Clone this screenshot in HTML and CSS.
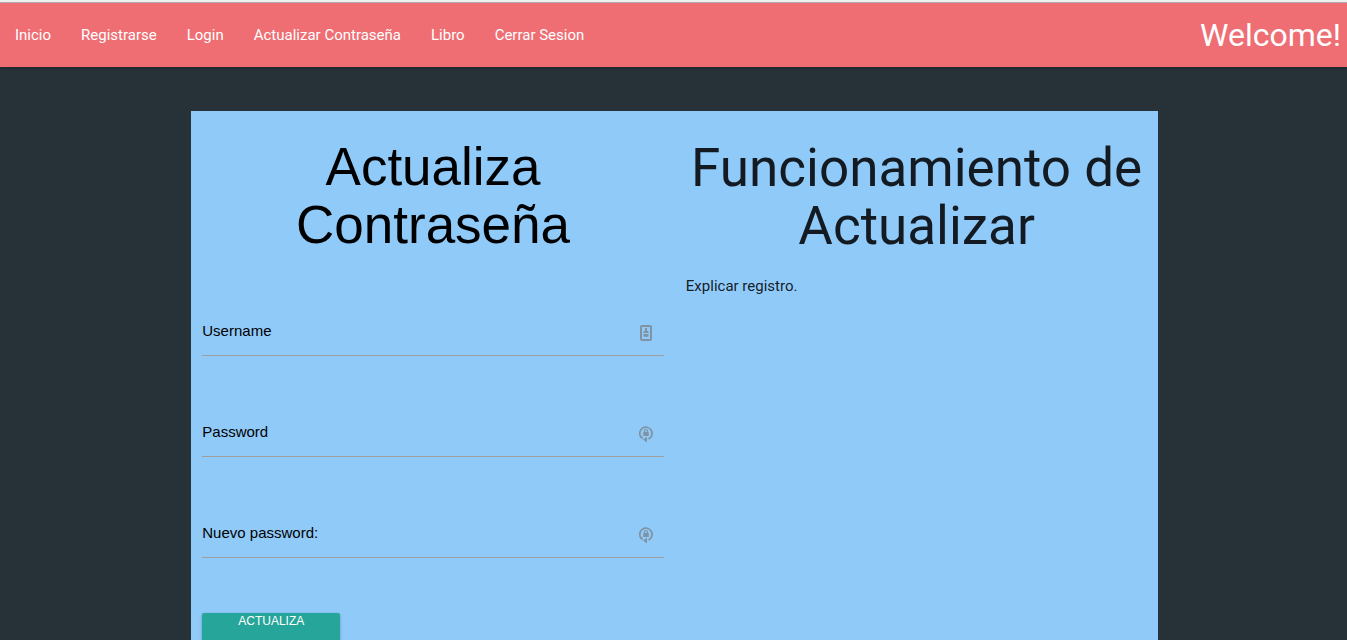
FILE: index.html
```html
<!DOCTYPE html>
<html lang="es">
<head>
<meta charset="utf-8">
<meta name="viewport" content="width=device-width, initial-scale=1">
<title>Actualizar Contraseña</title>
<link rel="stylesheet" href="styles.css">
</head>
<body>
<header class="navbar">
  <nav class="nav-links">
    <a href="#">Inicio</a>
    <a href="#">Registrarse</a>
    <a href="#">Login</a>
    <a href="#">Actualizar Contraseña</a>
    <a href="#">Libro</a>
    <a href="#">Cerrar Sesion</a>
  </nav>
  <a class="brand" href="#">Welcome!</a>
</header>
<main class="panel">
  <form class="column form">
    <h2 class="title title-form">Actualiza Contraseña</h2>
    <div class="field">
      <label for="username">Username</label>
      <input id="username" type="text">
      <svg class="field-icon" viewBox="0 0 16 18" aria-hidden="true">
        <rect x="3" y="2" width="10" height="14" rx="1" fill="none" stroke="currentColor" stroke-width="2"/>
        <path d="M7 4h2v3h1.5v2h-5V7H7zM5.5 10h5v2.8h-5z" fill="currentColor"/>
      </svg>
    </div>
    <div class="field">
      <label for="password">Password</label>
      <input id="password" type="password">
      <svg class="field-icon" viewBox="0 0 16 18" aria-hidden="true">
        <path d="M3.4 12.6A6.2 6.2 0 1 1 10.5 14" fill="none" stroke="currentColor" stroke-width="1.7"/>
        <path d="M9 11.8v5.6L5 14.6zM1.6 11.6l3.4.2-.6 2.8z" fill="currentColor"/>
        <path d="M5.3 7h5.4v4H5.3z" fill="currentColor"/>
        <path d="M6.5 7.3V6a1.5 1.5 0 0 1 3 0v1.3" fill="none" stroke="currentColor" stroke-width="1.2"/>
      </svg>
    </div>
    <div class="field">
      <label for="new-password">Nuevo password:</label>
      <input id="new-password" type="password">
      <svg class="field-icon" viewBox="0 0 16 18" aria-hidden="true">
        <path d="M3.4 12.6A6.2 6.2 0 1 1 10.5 14" fill="none" stroke="currentColor" stroke-width="1.7"/>
        <path d="M9 11.8v5.6L5 14.6zM1.6 11.6l3.4.2-.6 2.8z" fill="currentColor"/>
        <path d="M5.3 7h5.4v4H5.3z" fill="currentColor"/>
        <path d="M6.5 7.3V6a1.5 1.5 0 0 1 3 0v1.3" fill="none" stroke="currentColor" stroke-width="1.2"/>
      </svg>
    </div>
    <button class="submit" type="button">Actualiza</button>
  </form>
  <section class="column">
    <h2 class="title">Funcionamiento de Actualizar</h2>
    <p class="text">Explicar registro.</p>
  </section>
</main>
</body>
</html>
```
FILE: styles.css
```css
* {
  box-sizing: border-box;
}

body {
  margin: 0;
  background: #263238;
  color: rgba(0, 0, 0, 0.87);
  font: 15px/22px Roboto, sans-serif;
}

.navbar {
  display: flex;
  justify-content: space-between;
  align-items: center;
  height: 67px;
  padding-right: 6px;
  border-top: 2px solid #f0f0f0;
  background: #ee6e73;
  box-shadow: 0 1px 3px rgba(0, 0, 0, 0.3), inset 0 1px #b2adb3;
}

.nav-links {
  display: flex;
}

.nav-links a {
  padding: 0 15px;
  line-height: 64px;
}

.navbar a {
  color: #fff;
  text-decoration: none;
}

.navbar .brand {
  font-size: 32px;
  line-height: 64px;
}

.panel {
  display: grid;
  grid-template-columns: 1fr 1fr;
  width: 71.8%;
  margin: 44px 14% 0 auto;
  padding-bottom: 40px;
  background: #90caf9;
}

.column {
  padding: 0 11px;
}

.title {
  margin: 28px 0 20px;
  font-size: 53px;
  font-weight: 400;
  line-height: 58px;
  text-align: center;
}

.title-form {
  width: 300px;
  max-width: 100%;
  margin: 27px auto 56px;
}

.form {
  color: #000;
  font-family: "Liberation Sans", Arial, sans-serif;
}

.text {
  margin: 0;
}

.field {
  display: grid;
  align-items: center;
  margin-bottom: 55px;
}

.field label,
.field input,
.field-icon {
  grid-area: 1 / 1;
}

.field label {
  pointer-events: none;
  padding-bottom: 4px;
}

.field input {
  width: 100%;
  height: 46px;
  padding: 0 40px 0 0;
  border: 0;
  border-bottom: 1px solid #9e9e9e;
  background: transparent;
  font: inherit;
  outline: 0;
}

.field-icon {
  justify-self: end;
  width: 16px;
  height: 18px;
  margin-right: 10px;
  color: #7f93a3;
}

.submit {
  display: flex;
  justify-content: center;
  width: 138px;
  height: 36px;
  padding: 0;
  border: 0;
  border-radius: 2px;
  background: #26a69a;
  box-shadow: 0 1px 3px rgba(0, 0, 0, 0.26);
  color: #fff;
  font: 12px/16px "Liberation Sans", Arial, sans-serif;
  text-transform: uppercase;
}
```
